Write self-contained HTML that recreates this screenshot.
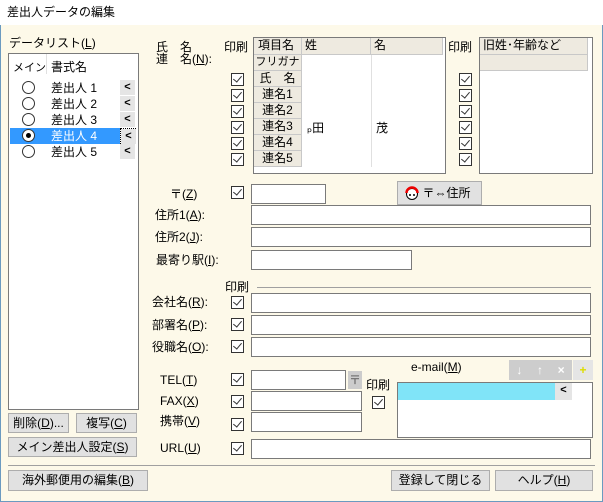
<!DOCTYPE html>
<html><head><meta charset="utf-8"><style>
*{margin:0;padding:0;box-sizing:border-box}
body{width:603px;height:502px;background:#fff;font-family:"Liberation Sans","Noto Sans CJK JP",sans-serif;font-size:12px;color:#000;position:relative;overflow:hidden}
.a{position:absolute;white-space:nowrap;line-height:14px}
.win{position:absolute;left:0;top:25px;width:603px;height:477px;background:#fdf9e9;border:1px solid #6b9ac0;border-top:none}
.in{position:absolute;background:#fff;border:1px solid #7a7a7a}
.cb{position:absolute;width:13px;height:13px;border:1px solid #333;background:#fff}
.cb::after{content:"";position:absolute;left:3px;top:0px;width:4px;height:7px;border-right:1px solid #333;border-bottom:1px solid #333;transform:rotate(40deg)}
.btn{position:absolute;background:#e1e1e1;border:1px solid #adadad;text-align:center;line-height:18px}
.gh{position:absolute;background:#eeeae0;border-right:1px solid #c8c8c8;border-bottom:1px solid #c8c8c8;line-height:15px}
.rad{position:absolute;width:13px;height:13px;border:1px solid #333;border-radius:50%;background:#fff}
.lt{position:absolute;width:15px;height:15px;background:#e5e5e5;font-weight:bold;text-align:center;line-height:14px;font-size:11px}
u{text-decoration:underline}
</style></head><body>
<div class="a" style="left:7px;top:5px">差出人データの編集</div>
<div class="win"></div>

<div class="a" style="left:9px;top:36px">データリスト(<u>L</u>)</div>
<div class="in" style="left:8px;top:53px;width:131px;height:357px"></div>
<div class="a" style="left:13px;top:61px;font-size:11px">メイン</div>
<div style="position:absolute;left:46px;top:54px;width:1px;height:20px;background:#e0e0e0"></div>
<div class="a" style="left:51px;top:60px">書式名</div>
<div style="position:absolute;left:10px;top:128px;width:110px;height:16px;background:#3399ff"></div>
<div style="position:absolute;left:120px;top:128px;width:16px;height:16px;border:1px dotted #000"></div>
<div class="rad" style="left:22px;top:81px"></div>
<div class="rad" style="left:22px;top:97px"></div>
<div class="rad" style="left:22px;top:113px"></div>
<div class="rad" style="left:22px;top:129px"><div style="position:absolute;left:3px;top:3px;width:5px;height:5px;border-radius:50%;background:#000"></div></div>
<div class="rad" style="left:22px;top:145px"></div>
<div class="a" style="left:51px;top:81px">差出人 1</div>
<div class="a" style="left:51px;top:97px">差出人 2</div>
<div class="a" style="left:51px;top:113px">差出人 3</div>
<div class="a" style="left:51px;top:129px;color:#fff">差出人 4</div>
<div class="a" style="left:51px;top:145px">差出人 5</div>
<div class="lt" style="left:120px;top:80px">&lt;</div>
<div class="lt" style="left:120px;top:96px">&lt;</div>
<div class="lt" style="left:120px;top:112px">&lt;</div>
<div class="lt" style="left:121px;top:129px;background:#e5e5e5">&lt;</div>
<div class="lt" style="left:120px;top:144px">&lt;</div>

<div class="btn" style="left:8px;top:413px;width:61px;height:20px">削除(<u>D</u>)...</div>
<div class="btn" style="left:76px;top:413px;width:61px;height:20px">複写(<u>C</u>)</div>
<div class="btn" style="left:8px;top:437px;width:129px;height:20px">メイン差出人設定(<u>S</u>)</div>
<div style="position:absolute;left:8px;top:465px;width:587px;height:1px;background:#a0a0a0"></div>
<div class="btn" style="left:8px;top:470px;width:140px;height:21px">海外郵便用の編集(<u>B</u>)</div>
<div class="btn" style="left:391px;top:470px;width:99px;height:21px">登録して閉じる</div>
<div class="btn" style="left:495px;top:470px;width:98px;height:21px">ヘルプ(<u>H</u>)</div>

<div class="a" style="left:156px;top:40px">氏　名</div>
<div class="a" style="left:156px;top:52px">連　名(<u>N</u>):</div>
<div class="a" style="left:224px;top:40px">印刷</div>
<div class="cb" style="left:231px;top:73px"></div><div class="cb" style="left:231px;top:89px"></div><div class="cb" style="left:231px;top:105px"></div><div class="cb" style="left:231px;top:121px"></div><div class="cb" style="left:231px;top:137px"></div><div class="cb" style="left:231px;top:153px"></div>

<div class="in" style="left:253px;top:37px;width:193px;height:137px"></div>
<div class="gh" style="left:254px;top:38px;width:48px;height:17px;padding-left:4px">項目名</div>
<div class="gh" style="left:302px;top:38px;width:69px;height:17px;padding-left:3px">姓</div>
<div class="gh" style="left:371px;top:38px;width:72px;height:17px;padding-left:3px">名</div>
<div class="gh" style="left:254px;top:55px;width:48px;height:16px;text-align:center;font-size:11px">フリガナ</div>
<div class="gh" style="left:254px;top:71px;width:48px;height:16px;text-align:center">氏　名</div>
<div class="gh" style="left:254px;top:87px;width:48px;height:16px;text-align:center">連名1</div>
<div class="gh" style="left:254px;top:103px;width:48px;height:16px;text-align:center">連名2</div>
<div class="gh" style="left:254px;top:119px;width:48px;height:16px;text-align:center">連名3</div>
<div class="gh" style="left:254px;top:135px;width:48px;height:16px;text-align:center">連名4</div>
<div class="gh" style="left:254px;top:151px;width:48px;height:16px;text-align:center">連名5</div>
<div style="position:absolute;left:371px;top:55px;width:1px;height:112px;background:#e0e0e0"></div>
<div class="a" style="left:307px;top:121px">ₚ田</div>
<div class="a" style="left:376px;top:121px">茂</div>

<div class="a" style="left:448px;top:40px">印刷</div>
<div class="cb" style="left:459px;top:73px"></div><div class="cb" style="left:459px;top:89px"></div><div class="cb" style="left:459px;top:105px"></div><div class="cb" style="left:459px;top:121px"></div><div class="cb" style="left:459px;top:137px"></div><div class="cb" style="left:459px;top:153px"></div>
<div class="in" style="left:479px;top:37px;width:114px;height:137px"></div>
<div class="gh" style="left:480px;top:38px;width:108px;height:17px;padding-left:3px">旧姓･年齢など</div>
<div class="gh" style="left:480px;top:55px;width:108px;height:16px"></div>

<div class="a" style="left:170px;top:187px">〒(<u>Z</u>)</div>
<div class="cb" style="left:231px;top:186px"></div>
<div class="in" style="left:251px;top:184px;width:75px;height:20px"></div>
<div class="btn" style="left:397px;top:181px;width:85px;height:24px;line-height:22px;padding-left:14px">〒⇔住所</div>
<svg style="position:absolute;left:404px;top:185px" width="16" height="16" viewBox="0 0 16 16"><circle cx="8" cy="9" r="5.5" fill="#fff" stroke="#000"/><path d="M2.5 8a5.5 5.5 0 0 1 11 0" fill="none" stroke="#e00" stroke-width="2.5"/><circle cx="6" cy="10" r="1" fill="#000"/><circle cx="10" cy="10" r="1" fill="#000"/></svg>
<div class="a" style="left:155px;top:208px">住所1(<u>A</u>):</div>
<div class="in" style="left:251px;top:205px;width:340px;height:20px"></div>
<div class="a" style="left:155px;top:230px">住所2(<u>J</u>):</div>
<div class="in" style="left:251px;top:227px;width:340px;height:20px"></div>
<div class="a" style="left:156px;top:253px">最寄り駅(<u>I</u>):</div>
<div class="in" style="left:251px;top:250px;width:161px;height:20px"></div>

<div class="a" style="left:225px;top:280px">印刷</div>
<div style="position:absolute;left:257px;top:287px;width:334px;height:1px;background:#a0a0a0"></div>
<div class="a" style="left:152px;top:295px">会社名(<u>R</u>):</div><div class="cb" style="left:231px;top:296px"></div>
<div class="in" style="left:251px;top:293px;width:340px;height:20px"></div>
<div class="a" style="left:152px;top:318px">部署名(<u>P</u>):</div><div class="cb" style="left:231px;top:318px"></div>
<div class="in" style="left:251px;top:315px;width:340px;height:20px"></div>
<div class="a" style="left:152px;top:340px">役職名(<u>O</u>):</div><div class="cb" style="left:231px;top:340px"></div>
<div class="in" style="left:251px;top:337px;width:340px;height:20px"></div>

<div class="a" style="left:160px;top:373px">TEL(<u>T</u>)</div><div class="cb" style="left:231px;top:373px"></div>
<div class="in" style="left:251px;top:370px;width:95px;height:20px"></div>
<div style="position:absolute;left:348px;top:371px;width:14px;height:18px;background:#ccc;color:#777;font-weight:bold;text-align:center;line-height:18px">〒</div>
<div class="a" style="left:160px;top:394px">FAX(<u>X</u>)</div><div class="cb" style="left:231px;top:395px"></div>
<div class="in" style="left:251px;top:391px;width:111px;height:20px"></div>
<div class="a" style="left:160px;top:414px">携帯(<u>V</u>)</div><div class="cb" style="left:231px;top:418px"></div>
<div class="in" style="left:251px;top:412px;width:111px;height:20px"></div>
<div class="a" style="left:366px;top:378px">印刷</div><div class="cb" style="left:372px;top:396px"></div>
<div class="a" style="left:411px;top:360px">e-mail(<u>M</u>)</div>
<div style="position:absolute;left:509px;top:360px;width:63px;height:20px;background:#cdcdcd;color:#fff;font-weight:bold;font-size:12px;line-height:20px;display:flex;justify-content:space-around">↓<span>↑</span><span>×</span></div>
<div style="position:absolute;left:573px;top:360px;width:20px;height:20px;background:#e5e5e5;color:#dd0;text-align:center;line-height:20px;font-weight:bold">+</div>
<div class="in" style="left:397px;top:382px;width:196px;height:56px"></div>
<div style="position:absolute;left:398px;top:383px;width:157px;height:17px;background:#80e4f8"></div>
<div class="lt" style="left:555px;top:383px;width:17px;height:17px">&lt;</div>

<div class="a" style="left:160px;top:441px">URL(<u>U</u>)</div><div class="cb" style="left:231px;top:442px"></div>
<div class="in" style="left:251px;top:439px;width:340px;height:20px"></div>
</body></html>
